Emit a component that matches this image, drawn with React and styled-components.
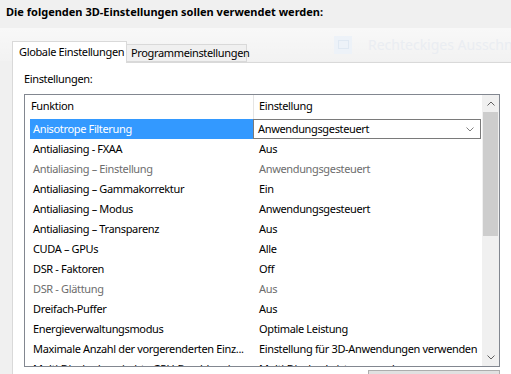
import React from "react";
import styled, { createGlobalStyle } from "styled-components";

const GlobalStyle = createGlobalStyle`
  html, body { margin: 0; padding: 0; background: #f0f0f0; }
  body {
    font-family: "Segoe UI", "Noto Sans", "Open Sans", sans-serif;
    font-size: 11px;
    letter-spacing: -0.35px;
    color: #000;
  }
  * { box-sizing: border-box; }
`;

const Page = styled.div`
  position: relative;
  width: 511px;
  height: 374px;
  overflow: hidden;
  background: #f0f0f0;
`;

const Title = styled.div`
  padding: 4px 0 0 6px;
  height: 20px;
  line-height: 16px;
  font-weight: 700;
  font-size: 11px;
  letter-spacing: 0;
`;

const SnipOverlay = styled.div`
  position: absolute;
  left: 0;
  top: 28px;
  width: 511px;
  height: 33px;
  background: linear-gradient(to bottom, rgba(255,255,255,0.55), rgba(255,255,255,0.15));
  display: flex;
  align-items: center;
  padding-left: 334px;
  gap: 16px;
  pointer-events: none;
  overflow: hidden;
`;

const SnipIcon = styled.div`
  width: 18px;
  height: 18px;
  flex: none;
  background: #edf2f8;
  display: flex;
  align-items: center;
  justify-content: center;
`;

const SnipText = styled.span`
  font-size: 14px;
  letter-spacing: 0;
  color: #eaedf2;
  white-space: nowrap;
`;

const TabStrip = styled.div`
  display: flex;
  align-items: flex-end;
  height: 21px;
  margin-top: 21px;
  padding-left: 12px;
  position: relative;
  z-index: 1;
`;

const Tab = styled.div`
  height: ${(p) => (p.$active ? "22px" : "18px")};
  margin-bottom: ${(p) => (p.$active ? "-1px" : "0")};
  background: ${(p) => (p.$active ? "#fff" : "#f0f0f0")};
  border: 1px solid #d9d9d9;
  border-bottom: ${(p) => (p.$active ? "none" : "1px solid #d9d9d9")};
  border-left: ${(p) => (p.$active ? "1px solid #d9d9d9" : "none")};
  padding: ${(p) => (p.$active ? "2px 0 0 6px" : "0 0 0 4px")};
  line-height: 16px;
  white-space: nowrap;
  width: ${(p) => p.$w}px;
  flex: none;
`;

const Panel = styled.div`
  margin-left: 12px;
  border-top: 1px solid #d9d9d9;
  border-left: 1px solid #d9d9d9;
  background: #fff;
  height: 313px;
  padding: 8px 0 0 11px;
`;

const Label = styled.div`
  line-height: 16px;
  height: 16px;
`;

const ListBox = styled.div`
  margin-top: 7px;
  width: 476px;
  height: 273px;
  border: 1px solid #828790;
  display: grid;
  grid-template-columns: 1fr 17px;
  overflow: hidden;
  background: #fff;
`;

const Rows = styled.div`
  display: flex;
  flex-direction: column;
  overflow: hidden;
`;

const HeaderRow = styled.div`
  display: flex;
  height: 24px;
  flex: none;
`;

const HeaderCell = styled.div`
  width: ${(p) => (p.$w ? `${p.$w}px` : "auto")};
  flex: ${(p) => (p.$w ? "none" : "1")};
  padding-left: ${(p) => p.$pad}px;
  line-height: 22px;
  border-right: ${(p) => (p.$sep ? "1px solid #e5e5e5" : "none")};
`;

const Row = styled.div`
  display: flex;
  height: 20px;
  flex: none;
  color: ${(p) => (p.$dim ? "#6d6d6d" : "#000")};
`;

const NameCell = styled.div`
  width: 228px;
  flex: none;
  padding-left: 5px;
`;

const NameText = styled.div`
  height: 20px;
  line-height: 19px;
  padding-left: 3px;
  background: ${(p) => (p.$sel ? "#3399ff" : "transparent")};
  color: ${(p) => (p.$sel ? "#fff" : "inherit")};
  white-space: nowrap;
  overflow: hidden;
`;

const ValueCell = styled.div`
  flex: 1;
  padding-left: ${(p) => (p.$combo ? "0" : "6px")};
  line-height: 19px;
  white-space: nowrap;
  overflow: hidden;
`;

const Combo = styled.div`
  width: 228px;
  height: 20px;
  border: 1px solid #7a7a7a;
  display: flex;
  align-items: center;
  justify-content: space-between;
  padding: 0 6px 0 4px;
  background: #fff;
  line-height: 18px;
`;

const ScrollBar = styled.div`
  background: #f0f0f0;
  display: flex;
  flex-direction: column;
`;

const ScrollButton = styled.div`
  height: 17px;
  flex: none;
  display: flex;
  align-items: center;
  justify-content: center;
`;

const Track = styled.div`
  flex: 1;
  display: flex;
  flex-direction: column;
`;

const Thumb = styled.div`
  height: 124px;
  background: #cdcdcd;
  margin: 0 1px;
`;

const ButtonRow = styled.div`
  display: flex;
  justify-content: flex-end;
  width: 476px;
  margin-top: 3px;
`;

const GhostButton = styled.div`
  width: 132px;
  height: 10px;
  border-top: 1px solid #adadad;
  border-left: 1px solid #adadad;
  border-right: 1px solid #adadad;
  background: #e1e1e1;
`;

const Chevron = ({ up, color = "#606060" }) => (
  <svg width="8" height="5" viewBox="0 0 8 5">
    <polyline
      points={up ? "0.5,4.5 4,1 7.5,4.5" : "0.5,0.5 4,4 7.5,0.5"}
      fill="none"
      stroke={color}
      strokeWidth="1"
    />
  </svg>
);

const rows = [
  ["Anisotrope Filterung", "Anwendungsgesteuert", false, true],
  ["Antialiasing - FXAA", "Aus"],
  ["Antialiasing – Einstellung", "Anwendungsgesteuert", true],
  ["Antialiasing – Gammakorrektur", "Ein"],
  ["Antialiasing – Modus", "Anwendungsgesteuert"],
  ["Antialiasing – Transparenz", "Aus"],
  ["CUDA – GPUs", "Alle"],
  ["DSR - Faktoren", "Off"],
  ["DSR - Glättung", "Aus", true],
  ["Dreifach-Puffer", "Aus"],
  ["Energieverwaltungsmodus", "Optimale Leistung"],
  ["Maximale Anzahl der vorgerenderten Einz...", "Einstellung für 3D-Anwendungen verwenden"],
  ["Multi-Display/gemischte GPU-Beschleunigung", "Multi-Display-Leistungsmodus"],
];

export default function App() {
  return (
    <>
      <GlobalStyle />
      <Page>
        <Title>Die folgenden 3D-Einstellungen sollen verwendet werden:</Title>
        <SnipOverlay>
          <SnipIcon>
            <svg width="11" height="9" viewBox="0 0 11 9">
              <rect x="0.5" y="0.5" width="10" height="8" fill="none" stroke="#dfe8f2" />
            </svg>
          </SnipIcon>
          <SnipText>Rechteckiges Ausschneiden</SnipText>
        </SnipOverlay>
        <TabStrip>
          <Tab $active $w={115}>Globale Einstellungen</Tab>
          <Tab $w={120}>Programmeinstellungen</Tab>
        </TabStrip>
        <Panel>
          <Label>Einstellungen:</Label>
          <ListBox>
            <Rows>
              <HeaderRow>
                <HeaderCell $w={229} $pad={6} $sep>Funktion</HeaderCell>
                <HeaderCell $pad={5}>Einstellung</HeaderCell>
              </HeaderRow>
              {rows.map(([name, value, dim, sel]) => (
                <Row key={name} $dim={dim}>
                  <NameCell>
                    <NameText $sel={sel}>{name}</NameText>
                  </NameCell>
                  <ValueCell $combo={sel}>
                    {sel ? (
                      <Combo>
                        <span>{value}</span>
                        <Chevron color="#808080" />
                      </Combo>
                    ) : (
                      value
                    )}
                  </ValueCell>
                </Row>
              ))}
            </Rows>
            <ScrollBar>
              <ScrollButton>
                <Chevron up />
              </ScrollButton>
              <Track>
                <Thumb />
              </Track>
              <ScrollButton>
                <Chevron />
              </ScrollButton>
            </ScrollBar>
          </ListBox>
          <ButtonRow>
            <GhostButton />
          </ButtonRow>
        </Panel>
      </Page>
    </>
  );
}
